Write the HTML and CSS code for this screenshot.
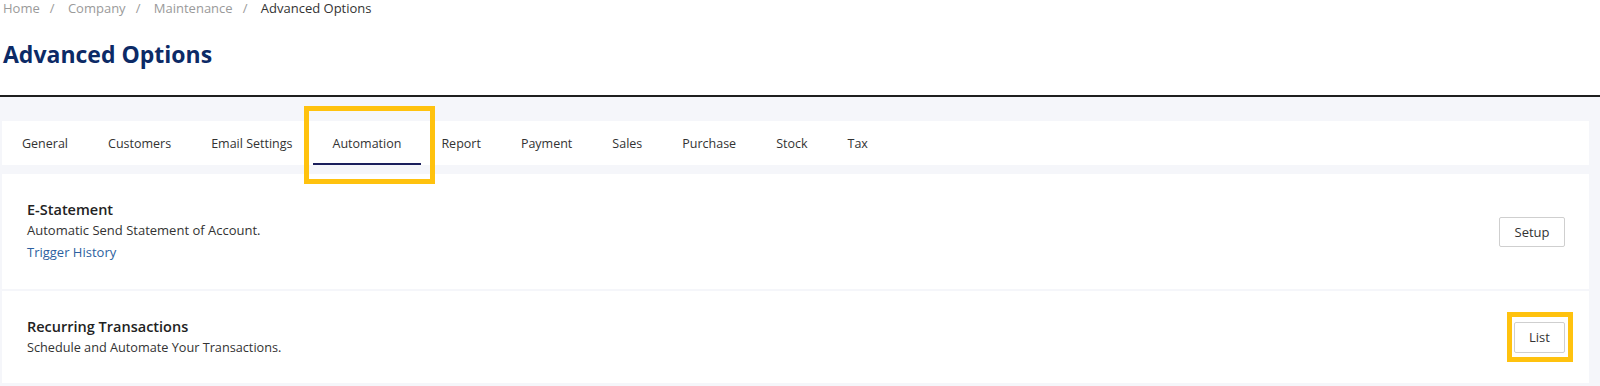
FILE: index.html
```html
<!DOCTYPE html>
<html lang="en">

<head>
	<meta charset="UTF-8" />
	<meta name="viewport" content="width=device-width, initial-scale=1.0" />
	<title>Advanced Options</title>
	<link rel="stylesheet" href="styles.css">
</head>

<body>
	<div class="header">
		<div class="breadcrumb">
			<a href="javascript:;">Home</a><span class="sep">/</span>
			<a href="javascript:;">Company</a><span class="sep">/</span>
			<a href="javascript:;">Maintenance</a><span class="sep">/</span>
			<span class="current">Advanced Options</span>
		</div>
		<h1 class="page-title">Advanced Options</h1>
	</div>

	<div class="main">
		<ul class="tabs">
			<li><a href="javascript:;">General</a></li>
			<li><a href="javascript:;">Customers</a></li>
			<li><a href="javascript:;">Email Settings</a></li>
			<li class="active mark"><a href="javascript:;">Automation</a></li>
			<li><a href="javascript:;">Report</a></li>
			<li><a href="javascript:;">Payment</a></li>
			<li><a href="javascript:;">Sales</a></li>
			<li><a href="javascript:;">Purchase</a></li>
			<li><a href="javascript:;">Stock</a></li>
			<li><a href="javascript:;">Tax</a></li>
		</ul>

		<div class="card card-tall">
			<div class="info">
				<div class="title">E-Statement</div>
				<div class="desc">Automatic Send Statement of Account.</div>
				<a class="link" href="javascript:;">Trigger History</a>
			</div>
			<button class="btn">Setup</button>
		</div>

		<div class="card card-short">
			<div class="info">
				<div class="title">Recurring Transactions</div>
				<div class="desc">Schedule and Automate Your Transactions.</div>
			</div>
			<span class="btn-wrap mark-btn"><button class="btn btn-list">List</button></span>
		</div>
	</div>
</body>

</html>
```

FILE: styles.css
```css
* {
	margin: 0;
	padding: 0;
	list-style: none;
	box-sizing: border-box;
}

body {
	font-family: "Open Sans", "Liberation Sans", sans-serif;
	font-size: 13px;
	color: #333;
	background-color: #f5f6fa;
}

a {
	text-decoration: none;
}

/* header */
.header {
	background-color: #fff;
	height: 97px;
	border-bottom: 2px solid #1e1e1e;
	padding-left: 3px;
}

.breadcrumb {
	height: 18px;
	line-height: 17px;
	color: #9a9a9a;
}

.breadcrumb a {
	color: #9a9a9a;
}

.breadcrumb .sep {
	margin: 0 10px;
	color: #9a9a9a;
}

.breadcrumb .current {
	color: #333;
}

.page-title {
	margin-top: 21px;
	font-size: 23px;
	line-height: 30px;
	font-weight: 700;
	color: #0c2a66;
}

/* main */
.main {
	padding: 24px 11px 0 2px;
}

.tabs {
	display: flex;
	height: 44px;
	background-color: #fff;
	font-size: 12.5px;
}

.tabs li {
	position: relative;
	display: flex;
	align-items: center;
	padding: 0 20px;
}

.tabs li a {
	color: #333;
}

.tabs li.active::after {
	content: "";
	position: absolute;
	left: 0;
	right: 0;
	bottom: 0;
	height: 2px;
	background-color: #1b1f5c;
}

.mark::before {
	content: "";
	position: absolute;
	left: -9px;
	right: -14px;
	top: -15px;
	bottom: -19px;
	border: 5px solid #ffc20e;
}

/* cards */
.card {
	display: flex;
	align-items: center;
	justify-content: space-between;
	background-color: #fff;
	padding: 0 24px 0 25px;
	margin-top: 9px;
}

.card-tall {
	height: 115px;
}

.card-short {
	height: 92px;
	margin-top: 2px;
}

.info .title {
	font-size: 14.5px;
	font-weight: 600;
	line-height: 20px;
	color: #222;
}

.info .desc {
	line-height: 21px;
	color: #333;
}

.card-short .desc {
	font-size: 12.7px;
}

.info .link {
	display: block;
	line-height: 22px;
	color: #2d5fa0;
}

.btn {
	font-family: inherit;
	font-size: 13px;
	color: #333;
	background-color: #fff;
	border: 1px solid #cfcfcf;
	border-radius: 2px;
	height: 30px;
	width: 66px;
	cursor: pointer;
}

.btn-list {
	width: 51px;
	height: 31px;
}

.btn-wrap {
	position: relative;
	display: flex;
}

.mark-btn::before {
	content: "";
	position: absolute;
	left: -7px;
	right: -8px;
	top: -10px;
	bottom: -9px;
	border: 5px solid #ffc20e;
}
```
